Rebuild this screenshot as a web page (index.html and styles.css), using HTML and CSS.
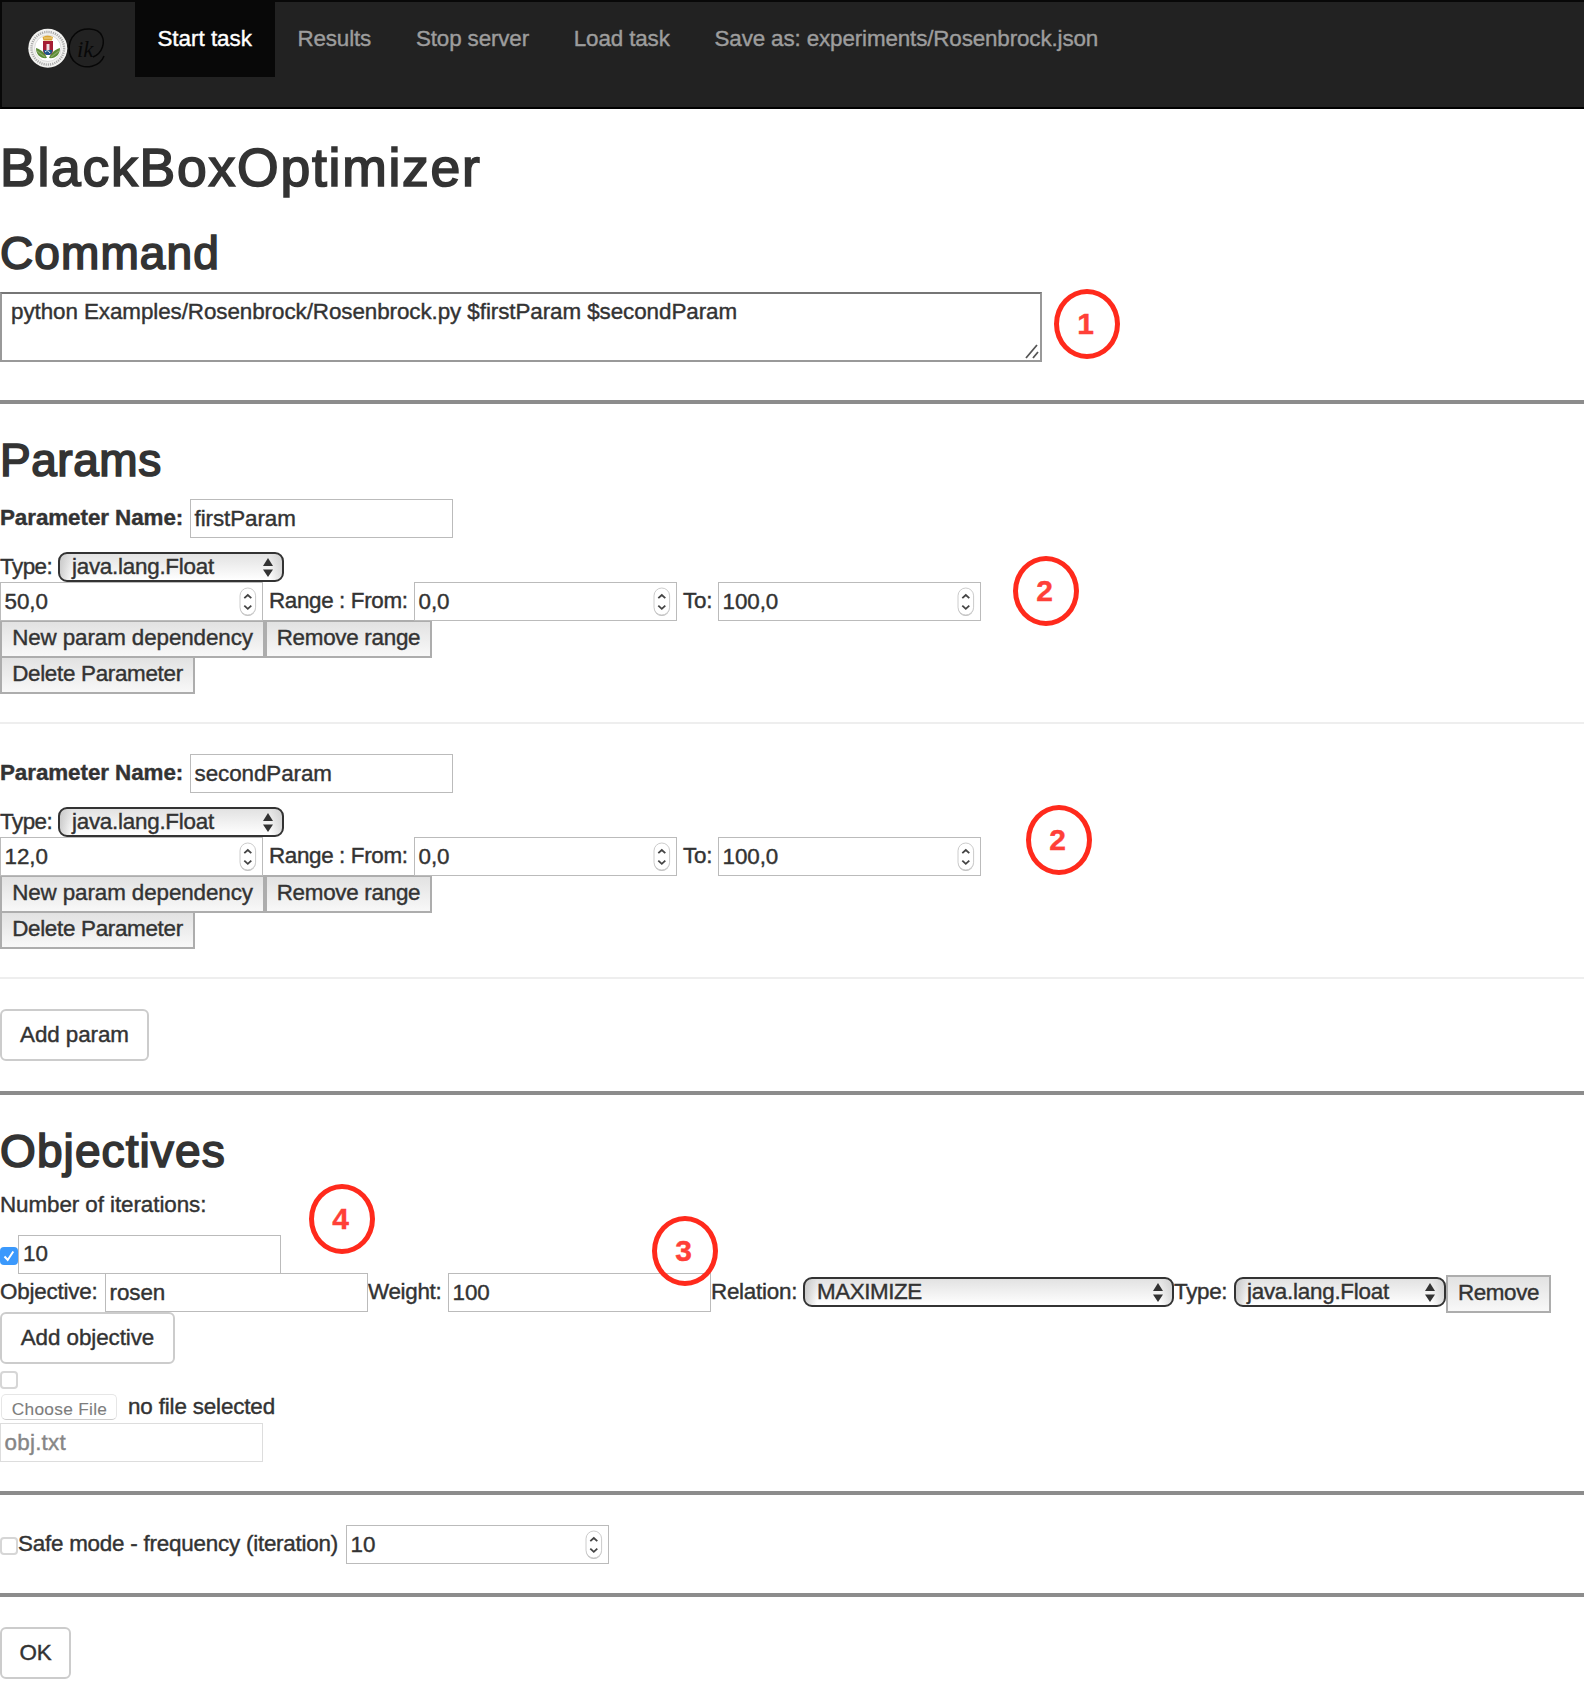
FILE: index.html
```html
<!DOCTYPE html>
<html lang="en">
<head>
<meta charset="utf-8">
<title>BlackBoxOptimizer</title>
<link rel="stylesheet" href="styles.css">
</head>
<body>
<svg class="defs" width="0" height="0">
  <symbol id="spin" viewBox="0 0 18 30">
    <rect x="1" y="2" width="15.6" height="27" rx="7.8" fill="#bbb"/>
    <rect x="1" y="1" width="15.6" height="27" rx="7.8" fill="#fff" stroke="#ccc" stroke-width="1"/>
    <path d="M5.3 11.2 8.8 8l3.5 3.2M5.3 18.6l3.5 3.2 3.5-3.2" fill="none" stroke="#444" stroke-width="1.8"/>
  </symbol>
  <symbol id="arrows" viewBox="0 0 10 19"><path d="M0 8 5 0l5 8zM0 11.5h10l-5 7.5z" fill="#333"/></symbol>
</svg>
<nav class="navbar">
  <svg class="logo" width="133" height="75" viewBox="2 2 133 75">
    <circle cx="47.8" cy="48.3" r="19.5" fill="#f2f2f0"/>
    <circle cx="47.8" cy="48.3" r="16.3" fill="none" stroke="#aaa" stroke-width="2.4" stroke-dasharray="1.2 1"/>
    <circle cx="47.8" cy="48.3" r="13.2" fill="#fff" stroke="#c8c8c8" stroke-width=".6"/>
    <path d="M36 48c0 7 5 11 11 10-2-5-5-8-11-10zM60 48c0 7-5 11-11 10 2-5 5-8 11-10z" fill="#5b8b35"/>
    <path d="M37 51l8 6M59 51l-8 6" stroke="#86a866" stroke-width="1.3"/>
    <path d="M43 41h10v9c0 3-2 5-5 5s-5-2-5-5z" fill="#a51d33"/>
    <path d="M43.5 50h9c0 3-2 5-4.500 5s-4.500-2-4.500-5z" fill="#1d568b"/>
    <path d="M46.500 44h3v6h-3z" fill="#eedde2"/><path d="M45 52q3-3 5 1" fill="none" stroke="#eee"/>
    <path d="M43.500 40.500 42.500 37q5-3 10.500 0l-1 3.500z" fill="#d9a536"/><path d="M44 38h8" stroke="#f3d78c"/>
    <path d="M93 57C103 53 105 42 102 36 98 27 82 27 75 34 67 42 67 56 76 63c9 7 24 4 28-7" fill="none" stroke="#070707" stroke-width="1.5"/>
    <text class="mark" x="77" y="57">ik</text>
  </svg>
  <a class="tab active">Start task</a>
  <a class="tab">Results</a>
  <a class="tab">Stop server</a>
  <a class="tab">Load task</a>
  <a class="tab">Save as: experiments/Rosenbrock.json</a>
</nav>

<main>
  <h1>BlackBoxOptimizer</h1>
  <h2 class="h-command">Command</h2>
  <div class="command">python Examples/Rosenbrock/Rosenbrock.py $firstParam $secondParam
    <svg class="grip" width="14" height="15" viewBox="0 0 14 15"><path d="M1 14 12 1M8 14l5-6" stroke="#555" stroke-width="1.8"/></svg>
  </div>
  <hr class="rule after-command">

  <h2 class="h-params">Params</h2>
  <section class="param">
    <div class="row name-row"><b class="name-label">Parameter Name:</b><span class="field">firstParam</span></div>
    <div class="row type-row"><span class="type-label">Type:</span><span class="select">java.lang.Float<svg width="10" height="19"><use href="#arrows"/></svg></span></div>
    <div class="row">
      <span class="field">50,0<svg width="18" height="30"><use href="#spin"/></svg></span>
      <span class="range-label">Range : From:</span>
      <span class="field">0,0<svg width="18" height="30"><use href="#spin"/></svg></span>
      <span class="to-label">To:</span>
      <span class="field">100,0<svg width="18" height="30"><use href="#spin"/></svg></span>
    </div>
    <div class="row buttons"><span class="button w-dep">New param dependency</span><span class="button w-range">Remove range</span></div>
    <div class="row buttons-last"><span class="button w-delete">Delete Parameter</span></div>
  </section>
  <hr class="thin">
  <section class="param">
    <div class="row name-row"><b class="name-label">Parameter Name:</b><span class="field">secondParam</span></div>
    <div class="row type-row"><span class="type-label">Type:</span><span class="select">java.lang.Float<svg width="10" height="19"><use href="#arrows"/></svg></span></div>
    <div class="row">
      <span class="field">12,0<svg width="18" height="30"><use href="#spin"/></svg></span>
      <span class="range-label">Range : From:</span>
      <span class="field">0,0<svg width="18" height="30"><use href="#spin"/></svg></span>
      <span class="to-label">To:</span>
      <span class="field">100,0<svg width="18" height="30"><use href="#spin"/></svg></span>
    </div>
    <div class="row buttons"><span class="button w-dep">New param dependency</span><span class="button w-range">Remove range</span></div>
    <div class="row buttons-last"><span class="button w-delete">Delete Parameter</span></div>
  </section>
  <hr class="thin">
  <div class="btn add-param">Add param</div>
  <hr class="rule before-objectives">

  <h2 class="h-objectives">Objectives</h2>
  <div class="iterations">Number of iterations:</div>
  <div class="row">
    <span class="check on"><svg width="18" height="18" viewBox="0 0 18 18"><path d="M4.500 9.500 7.700 13 13.300 4.500" fill="none" stroke="#fff" stroke-width="2"/></svg></span>
    <span class="field iter">10</span>
  </div>
  <div class="row objective">
    <span class="obj-label">Objective:</span><span class="field">rosen</span>
    <span class="weight-label">Weight:</span><span class="field">100</span>
    <span class="rel-label">Relation:</span><span class="select sel-rel">MAXIMIZE<svg width="10" height="19"><use href="#arrows"/></svg></span>
    <span class="obj-type">Type:</span><span class="select sel-type">java.lang.Float<svg width="10" height="19"><use href="#arrows"/></svg></span>
    <span class="button w-remove">Remove</span>
  </div>
  <div class="btn add-objective">Add objective</div>
  <div class="check off"></div>
  <div class="row file"><span class="choose">Choose File</span><span class="nofile">no file selected</span></div>
  <div class="field disabled">obj.txt</div>
  <hr class="rule">
  <div class="row safe">
    <span class="check"></span><span class="safe-label">Safe mode - frequency (iteration)</span>
    <span class="field">10<svg width="18" height="30"><use href="#spin"/></svg></span>
  </div>
  <hr class="rule">
  <div class="btn ok">OK</div>
</main>

<div class="callout c1">1</div>
<div class="callout c2">2</div>
<div class="callout c3">2</div>
<div class="callout c4">3</div>
<div class="callout c5">4</div>
</body>
</html>
```

FILE: styles.css
```css
* { box-sizing: border-box; }
body {
  margin: 0;
  position: relative;
  width: 1584px;
  height: 1702px;
  overflow: hidden;
  background: #fff;
  color: #333;
  font: 22.4px/32px "Liberation Sans", Arial, sans-serif;
  letter-spacing: -.07px;
  white-space: nowrap;
  -webkit-text-stroke: 0.4px;
}
.defs { position: absolute; }

.navbar {
  display: flex;
  align-items: flex-start;
  height: 109px;
  background: #222;
  border: 2px solid #080808;
  border-right: 0;
  border-bottom-color: #000;
}
.logo { flex: none; }
.mark { font: italic 23px "Liberation Serif", serif; fill: #080808; -webkit-text-stroke: 0; }
.tab { padding: 21px 22.4px 22px; color: #9d9d9d; letter-spacing: -.13px; }
.tab.active { background: #080808; color: #fff; width: 140px; letter-spacing: 0; }

h1, h2 { margin: 0; font-weight: 400; -webkit-text-stroke: 1.7px #333; }
h1 { margin-top: 29px; font-size: 53.5px; line-height: 60px; letter-spacing: 1.75px; }
h2 { font-size: 46px; line-height: 50px; letter-spacing: 1.1px; }
.h-command { margin-top: 30px; }
.h-params { margin-top: 31px; letter-spacing: .55px; }
.h-objectives { margin-top: 31px; }

.command {
  position: relative;
  width: 1042px;
  height: 70px;
  margin-top: 14px;
  padding: 2px 9px;
  border: 2px solid #999;
  border-top-color: #767676;
}
.grip { position: absolute; right: 1px; bottom: 1px; }

hr { margin: 29px 0 30px; border: 0; }
.rule { height: 4px; background: #8c8c8c; }
.after-command { margin: 38px 0 0; }
.before-objectives { margin: 30px 0 31px; }
.thin { height: 2px; margin: 28px 0 30px; background: #eee; }

.row { display: flex; align-items: flex-start; line-height: 38px; }
.name-row { margin-bottom: 14px; }
.h-params + .param { margin-top: 14px; }
.name-label { width: 190px; }
.field {
  position: relative;
  flex: none;
  display: block;
  width: 263px;
  height: 39px;
  padding-left: 3.5px;
  border: 1px solid #bbb;
  line-height: 37px;
}
.field svg { position: absolute; right: 5px; top: 4px; }
.type-row { height: 30px; line-height: 29px; }
.type-label { width: 58px; letter-spacing: -.5px; }
.select {
  position: relative;
  flex: none;
  width: 226px;
  height: 30px;
  padding-left: 12px;
  border: 2px solid #333;
  border-radius: 9px;
  line-height: 25px;
  letter-spacing: -.25px;
  background: linear-gradient(90deg, rgba(190,190,190,.7), rgba(255,255,255,0) 12px calc(100% - 12px), rgba(190,190,190,.5)), linear-gradient(#e2e2e2, #fff);
}
.select svg { position: absolute; right: 9px; top: 4px; }
.range-label { width: 151px; padding-left: 6px; letter-spacing: -.35px; }
.to-label { width: 41px; padding-left: 6px; letter-spacing: -.2px; }

.button {
  flex: none;
  height: 38px;
  border: 2px solid #adadad;
  background: linear-gradient(#e2e2e2, #f8f8f8);
  line-height: 31px;
  letter-spacing: -.1px;
  text-align: center;
}
.buttons { margin-top: -1px; }
.buttons-last { margin-top: -2px; }
.w-dep { width: 265px; }
.w-range { width: 167px; letter-spacing: -.28px; }
.w-delete { width: 195px; letter-spacing: -.3px; }
.w-remove { width: 105px; margin-top: 2px; letter-spacing: -.4px; }

.btn {
  height: 52px;
  border: 2px solid #ccc;
  border-radius: 6px;
  text-align: center;
  line-height: 47px;
}
.add-param { width: 149px; }
.add-objective { width: 175px; margin-top: -1px; }
.ok { width: 71px; }

.h-params, .h-objectives { margin-bottom: 0; }
.rule + .h-objectives { margin-top: 0; }
.iterations { margin-top: 12px; height: 47px; line-height: 33px; }
.check {
  flex: none;
  width: 18px;
  height: 18px;
  margin-top: 12px;
  border: 2px solid #d6d6d6;
  border-radius: 4px;
}
.check.on { border: 0; background: #3b99fc; }
.check.on svg { display: block; }
.check.off { margin-top: 7px; }
.iter { padding-left: 4px; line-height: 36px; }
.objective { margin-top: -1px; }
.obj-label { width: 105px; letter-spacing: -.2px; }
.weight-label { width: 80px; letter-spacing: -.3px; }
.rel-label { width: 92px; letter-spacing: -.25px; }
.obj-type { width: 60px; letter-spacing: -.3px; }
.objective .select { margin-top: 4px; }
.sel-rel { width: 371px; letter-spacing: -.45px; }
.sel-type { width: 212px; padding-left: 11px; }

.file { height: 34px; padding-top: 5px; }
.choose {
  width: 116px;
  height: 26px;
  margin-left: 1px;
  padding-left: 1px;
  border: 1px solid #e6e6e6;
  border-bottom-color: #ccc;
  border-radius: 5px;
  color: #7d7d7d;
  font-size: 17.3px;
  letter-spacing: .3px;
  line-height: 28px;
  text-align: center;
  -webkit-text-stroke: 0.1px;
}
.nofile { margin-left: 11px; line-height: 25px; letter-spacing: -.15px; }
.disabled { border-color: #ddd; color: #868686; letter-spacing: .25px; }
.safe-label { width: 328px; letter-spacing: -.22px; }

.callout {
  position: absolute;
  width: 66px;
  height: 70px;
  padding-right: 3px;
  border: 5px solid #ff2a1c;
  border-radius: 50%;
  color: #ff4038;
  font-size: 30px;
  font-weight: 700;
  line-height: 59px;
  text-align: center;
}
.c1 { left: 1054px; top: 289px; }
.c2 { left: 1013px; top: 556px; }
.c3 { left: 1026px; top: 805px; }
.c4 { left: 652px; top: 1216px; }
.c5 { left: 309px; top: 1184px; }
```
